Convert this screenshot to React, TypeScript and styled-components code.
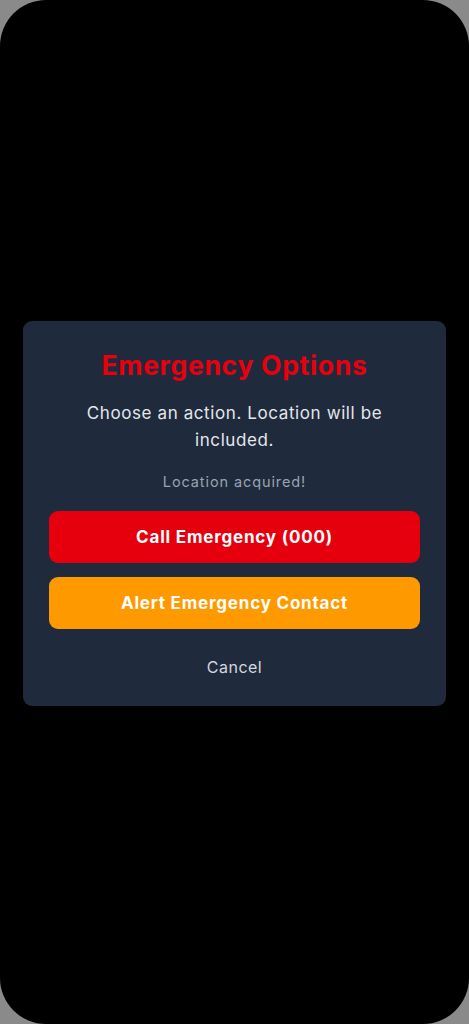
import styled, { createGlobalStyle } from 'styled-components';

const GlobalStyle = createGlobalStyle`
  html, body {
    margin: 0;
    padding: 0;
    background: #8a8a8a;
  }
  * {
    box-sizing: border-box;
  }
`;

const Phone = styled.div`
  width: 469px;
  height: 1024px;
  background: #000;
  border-radius: 46px;
  display: flex;
  align-items: center;
  justify-content: center;
  font-family: Inter, 'Noto Sans', sans-serif;
`;

const Card = styled.div`
  width: 423px;
  margin-top: 3px;
  background: #1f2a3c;
  border-radius: 9px;
  padding: 26px 26px 28px;
  display: flex;
  flex-direction: column;
  align-items: center;
  text-align: center;
`;

const Title = styled.h2`
  margin: 0;
  color: #e8000f;
  font-size: 26.5px;
  font-weight: 700;
  letter-spacing: 0.7px;
  line-height: 36px;
`;

const Message = styled.p`
  margin: 17px 0 0;
  color: #e4e7ec;
  font-size: 17px;
  letter-spacing: 0.6px;
  line-height: 27px;
  padding: 0 20px;
`;

const Status = styled.p`
  margin: 18px 0 0;
  color: #9aa3b2;
  font-size: 14.5px;
  letter-spacing: 0.9px;
  line-height: 20px;
`;

const Actions = styled.div`
  width: 100%;
  margin-top: 19px;
  display: flex;
  flex-direction: column;
  gap: 14px;
`;

const ActionButton = styled.button<{ $tone: string }>`
  width: 100%;
  height: 52px;
  border: none;
  border-radius: 9px;
  background: ${(p) => p.$tone};
  color: #fff;
  font-family: inherit;
  font-size: 17px;
  font-weight: 700;
  letter-spacing: 0.8px;
`;

const CancelButton = styled.button`
  margin-top: 27px;
  border: none;
  background: transparent;
  color: #d4d8de;
  font-family: inherit;
  font-size: 16px;
  letter-spacing: 0.5px;
  line-height: 22px;
  padding: 0;
`;

export default function App() {
  return (
    <>
      <GlobalStyle />
      <Phone>
        <Card>
          <Title>Emergency Options</Title>
          <Message>Choose an action. Location will be included.</Message>
          <Status>Location acquired!</Status>
          <Actions>
            <ActionButton $tone="#e6000e">Call Emergency (000)</ActionButton>
            <ActionButton $tone="#ff9900">Alert Emergency Contact</ActionButton>
          </Actions>
          <CancelButton>Cancel</CancelButton>
        </Card>
      </Phone>
    </>
  );
}
